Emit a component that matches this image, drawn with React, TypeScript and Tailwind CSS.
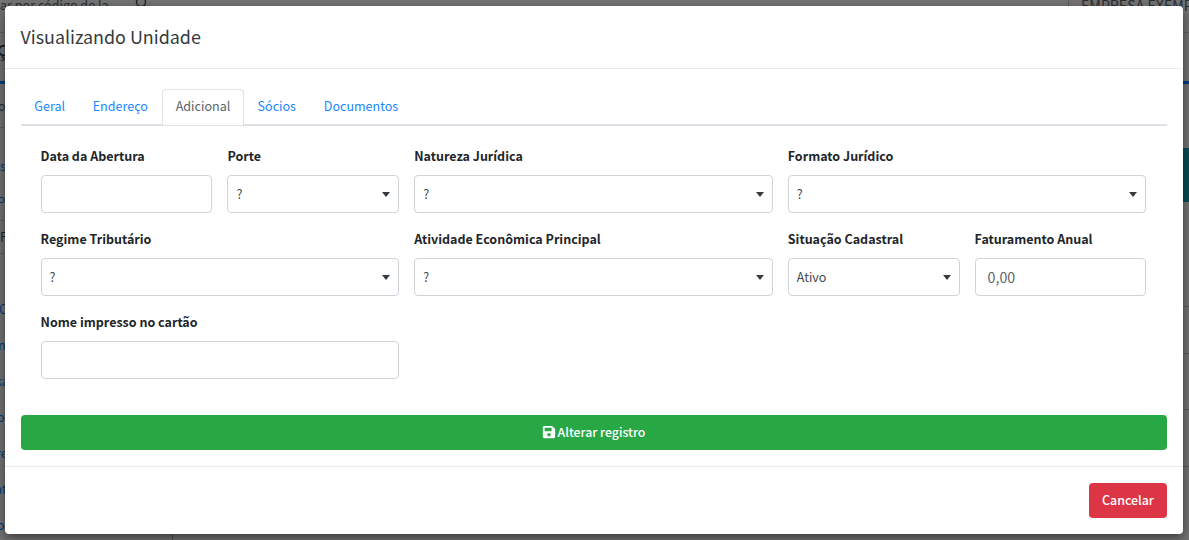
import { FaSave } from 'react-icons/fa';
import type { ReactNode } from 'react';

function Field({ label, span, children }: { label: string; span: string; children: ReactNode }) {
  return (
    <div className={span}>
      <div className="mb-[9px] h-[20px] whitespace-nowrap text-[12.5px] font-bold leading-[20px] text-[#212529]">{label}</div>
      {children}
    </div>
  );
}

function Input({ value = '' }: { value?: string }) {
  return (
    <div className="flex h-[38px] items-center rounded-[4px] border border-[#ced4da] px-[12px] pt-[1px] text-[14.2px] text-[#5c646b]">
      {value}
    </div>
  );
}

function Select({ value }: { value: string }) {
  return (
    <div className="flex h-[38px] items-center justify-between rounded-[4px] border border-[#ced4da] pr-[8px] pl-[8px] text-[12.5px] text-[#444a50]">
      <span>{value}</span>
      <svg width="8" height="5" viewBox="0 0 8 5" className="fill-[#343a40]">
        <path d="M0 0h8L4 5z" />
      </svg>
    </div>
  );
}

function Tab({ label, width }: { label: string; width: string }) {
  return <div className={`${width} flex h-[35px] items-center justify-center text-[12.55px] text-[#1a88ff]`}>{label}</div>;
}

const menu = [
  { text: 's', row: 'h-[36px] text-[#003e80]' },
  { text: 'P', row: 'h-[36px] -ml-[3px] text-[#003e80]' },
  { text: 'F', row: 'h-[34px] border-y border-[#606060] text-[#212529]' },
  { text: '', row: 'h-[37px]' },
  { text: 'C', row: 'h-[36px] -ml-[1px] text-[#003e80]' },
  { text: 'n', row: 'h-[36px] -ml-[2px] text-[#003e80]' },
  { text: 'ka', row: 'h-[36px] -ml-[5px] text-[#003e80]' },
  { text: 'or', row: 'h-[36px] -ml-[3px] text-[#003e80]' },
  { text: 're', row: 'h-[36px] -ml-[4px] text-[#003e80]' },
  { text: 'at', row: 'h-[36px] -ml-[5px] text-[#003e80]' },
  { text: 'o', row: 'h-[36px] -ml-[3px] text-[#003e80]' },
];

function Backdrop() {
  return (
    <div className="flex h-[540px] flex-col text-[12.6px] text-[#2b2e31]">
      <div className="flex h-[32px] shrink-0 justify-between">
        <div className="flex">
          <span className="-mt-[5px] w-[135px] text-[12.6px] leading-[20px]">ar por código de la</span>
          <svg width="14" height="14" viewBox="0 0 14 14" className="-mt-[3px]" fill="none" stroke="#26292c" strokeWidth="1.5">
            <circle cx="6" cy="5" r="4.5" />
            <path d="M9 8l4 4" />
          </svg>
        </div>
        <div className="w-[121px] border-l border-[#5d5d5d] pl-[12px] text-[14.2px] whitespace-nowrap">
          <div className="-mt-[5px] leading-[20px]">EMPRESA EXEMP</div>
        </div>
      </div>
      <div className="flex h-[49px] shrink-0 border-t border-[#606060] text-[20px] leading-[29px]">
        <span className="-ml-[3px] text-[#16191c]">ç</span>
      </div>
      <div className="h-[3px] shrink-0 bg-[#003e80]" />
      <div className="flex grow justify-between">
        <div className="w-[173px] border-r border-[#505050]">
          <div className="-ml-[2px] h-[44px] border-b border-[#606060] leading-[44px]">o</div>
          <div className="h-[20px]" />
          {menu.map((item, i) => (
            <div key={i} className={`flex items-center ${item.row}`}>
              <span>{item.text}</span>
            </div>
          ))}
        </div>
        <div className="w-[20px]">
          <div className="h-[64px]" />
          <div className="h-[54px] bg-[#0b4c56]" />
          <div className="h-[105px] border-b border-[#5d5d5d]" />
          <div className="h-[47px] border-b border-[#5d5d5d]" />
          <div className="h-[56px] border-b border-[#5d5d5d]" />
          <div className="h-[57px] border-b border-[#5d5d5d]" />
        </div>
      </div>
    </div>
  );
}

export default function App() {
  return (
    <div className="relative h-[540px] w-[1189px] overflow-hidden bg-[#747474] font-['Noto_Sans_CJK_SC','Noto_Sans',sans-serif]">
      <Backdrop />
      <div className="absolute top-[6px] left-[5px] flex h-[528px] w-[1178px] flex-col rounded-[4px] bg-white shadow-[0_4px_12px_rgba(0,0,0,0.5)]">
        <div className="flex h-[63px] shrink-0 items-center border-b border-[#e9ecef] px-[15.5px] pb-[2px] text-[17.9px] text-[#343a40]">
          Visualizando Unidade
        </div>
        <div className="flex h-[398px] shrink-0 flex-col border-b border-[#e9ecef] px-[16px] pt-[20px]">
          <div className="flex h-[37px] shrink-0 border-b-2 border-[#dee2e6]">
            <Tab label="Geral" width="w-[57.5px]" />
            <Tab label="Endereço" width="w-[83.5px]" />
            <div className="flex h-[36px] w-[82px] items-center justify-center rounded-t-[4px] border border-b-0 border-[#dee2e6] bg-white pb-[2px] text-[12.55px] text-[#5c646b]">
              Adicional
            </div>
            <Tab label="Sócios" width="w-[65.5px]" />
            <Tab label="Documentos" width="w-[103px]" />
          </div>
          <div className="grid grid-cols-6 gap-x-[15px] gap-y-[16px] pt-[20px] pr-[20.6px] pl-[19.6px]">
            <Field label="Data da Abertura" span="col-span-1"><Input /></Field>
            <Field label="Porte" span="col-span-1"><Select value="?" /></Field>
            <Field label="Natureza Jurídica" span="col-span-2"><Select value="?" /></Field>
            <Field label="Formato Jurídico" span="col-span-2"><Select value="?" /></Field>
            <Field label="Regime Tributário" span="col-span-2"><Select value="?" /></Field>
            <Field label="Atividade Econômica Principal" span="col-span-2"><Select value="?" /></Field>
            <Field label="Situação Cadastral" span="col-span-1"><Select value="Ativo" /></Field>
            <Field label="Faturamento Anual" span="col-span-1"><Input value="0,00" /></Field>
            <Field label="Nome impresso no cartão" span="col-span-2"><Input /></Field>
          </div>
          <button className="mt-[36px] flex h-[35px] items-center justify-center gap-[2px] rounded-[4px] bg-[#28a745] pr-[1px] text-[12.3px] font-medium text-white">
            <FaSave size={14} className="-mt-[2px]" />
            <span>Alterar registro</span>
          </button>
        </div>
        <div className="flex grow items-center justify-end px-[16px]">
          <button className="h-[35px] w-[78px] rounded-[4px] bg-[#dc3545] text-[12.4px] font-medium text-white">Cancelar</button>
        </div>
      </div>
    </div>
  );
}
